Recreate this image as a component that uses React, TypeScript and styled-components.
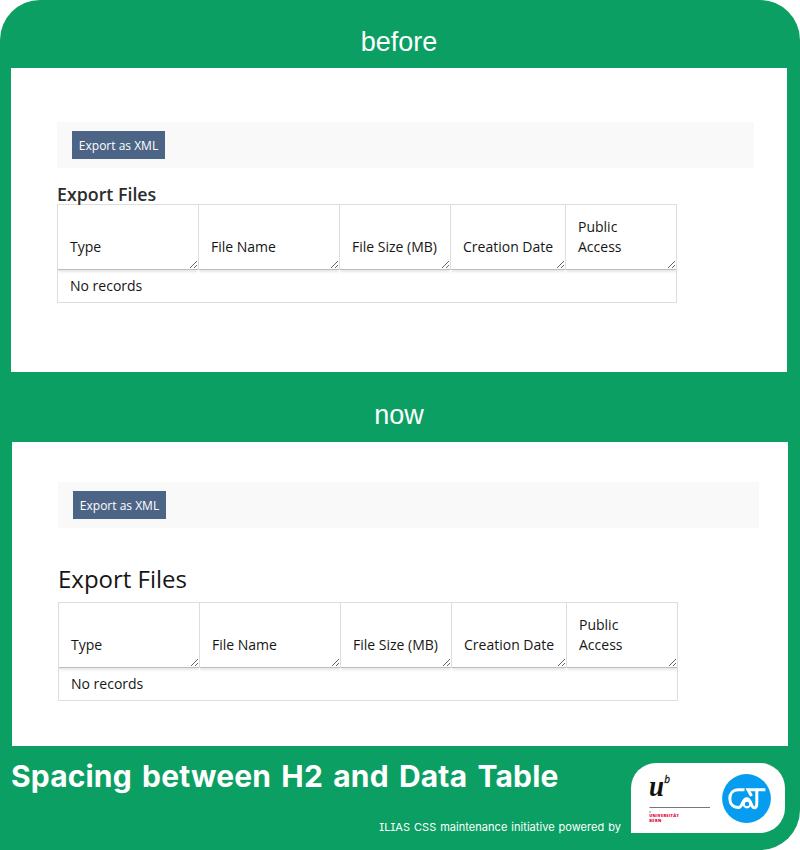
import React from "react";
import styled, { createGlobalStyle } from "styled-components";

const GlobalStyle = createGlobalStyle`
  *, *::before, *::after { box-sizing: border-box; }
  body { margin: 0; background: #fff; }
`;

const Poster = styled.main`
  display: flex;
  flex-direction: column;
  width: 800px;
  height: 850px;
  background: #0c9f64;
  border-radius: 40px 40px 40px 0;
  color: #fff;
  overflow: hidden;
`;

const Caption = styled.h2<{ $height: number; $nudge: number }>`
  flex: none;
  height: ${(p) => p.$height}px;
  margin: 0;
  padding: ${(p) => p.$nudge}px 2px 0 0;
  font: 400 27px/36px "Liberation Sans", sans-serif;
  text-align: center;
`;

const Panel = styled.section<{ $left: number; $top: number }>`
  flex: none;
  width: 776px;
  height: 304px;
  margin-left: ${(p) => p.$left}px;
  padding: ${(p) => p.$top}px 0 0 46px;
  background: #fff;
  color: #161616;
  font: 14px/20px "Open Sans", sans-serif;
`;

const Toolbar = styled.div<{ $width: number }>`
  display: flex;
  align-items: center;
  width: ${(p) => p.$width}px;
  height: 46px;
  padding-left: 15px;
  background: #f9f9f9;
`;

const Button = styled.button`
  width: 93px;
  height: 28px;
  padding: 1px 0 0;
  border: 0;
  background: #4c6586;
  color: #fff;
  font: 12px/27px "Open Sans", sans-serif;
  white-space: nowrap;
`;

const SectionTitle = styled.h3<{ $large?: boolean }>`
  margin: ${(p) => (p.$large ? "35px 0 8px" : "14px 0 -2px")};
  font-family: "Open Sans", sans-serif;
  font-size: ${(p) => (p.$large ? 24 : 17.8)}px;
  font-weight: ${(p) => (p.$large ? 400 : 600)};
  line-height: ${(p) => (p.$large ? 31 : 24)}px;
  color: ${(p) => (p.$large ? "#161616" : "#2c2c2c")};
`;

const Table = styled.div`
  width: 620px;
  height: 99px;
  border: 1px solid #ddd;
  border-right: 0;
`;

const HeaderRow = styled.div`
  display: grid;
  grid-template-columns: 141px 141px 111px 115px 111px;
  height: 65px;
`;

const HeaderCell = styled.div`
  position: relative;
  display: flex;
  align-items: flex-end;
  padding: 0 11px 13px 12px;
  border-right: 1px solid #ddd;
  white-space: pre-line;

  &::after {
    content: "";
    position: absolute;
    left: 0;
    right: 0;
    bottom: 0;
    height: 1px;
    background: #bdbdbd;
    box-shadow: 0 1px 3px rgba(0, 0, 0, 0.3);
    clip-path: inset(0 0 -5px 0);
  }
`;

const Grip = styled.svg`
  position: absolute;
  right: 0;
  bottom: 2px;
`;

const EmptyRow = styled.div`
  height: 32px;
  padding: 6px 12px;
  border-right: 1px solid #ddd;
`;

const Footer = styled.footer`
  display: flex;
  flex: 1;
  justify-content: space-between;
  padding: 0 15px 0 11px;
`;

const FooterText = styled.div`
  display: flex;
  flex-direction: column;
  width: 610px;
  font-family: Inter, sans-serif;
  font-feature-settings: "cv08" 1;
`;

const Title = styled.h1`
  margin: 9px 0 0;
  font-size: 30px;
  font-weight: 700;
  line-height: 42px;
  letter-spacing: 0.16px;
  word-spacing: 3px;
  white-space: nowrap;
`;

const Credit = styled.p`
  align-self: flex-end;
  margin: 21px 0 0;
  font-size: 11px;
  line-height: 18px;
  letter-spacing: 0.04px;
  word-spacing: 0.8px;
  white-space: nowrap;
`;

const LogoCard = styled.div`
  display: flex;
  width: 154px;
  height: 70px;
  margin-top: 17px;
  background: #fff;
  border-radius: 25px 25px 25px 0;
`;

const columns = ["Type", "File Name", "File Size (MB)", "Creation Date", "Public\nAccess"];

function DataTable() {
  return (
    <Table>
      <HeaderRow>
        {columns.map((name) => (
          <HeaderCell key={name}>
            {name}
            <Grip width="8" height="8" viewBox="0 0 8 8" shapeRendering="crispEdges">
              <path
                d="M0 7h1v1H0zM1 6h1v1H1zM2 5h1v1H2zM3 4h1v1H3zM4 3h1v1H4zM5 2h1v1H5zM6 1h1v1H6zM4 7h1v1H4zM5 6h1v1H5zM6 5h1v1H6z"
                fill="#666"
              />
            </Grip>
          </HeaderCell>
        ))}
      </HeaderRow>
      <EmptyRow>No records</EmptyRow>
    </Table>
  );
}

function ExportPanel({ left, top, barWidth, large }: { left: number; top: number; barWidth: number; large?: boolean }) {
  return (
    <Panel $left={left} $top={top}>
      <Toolbar $width={barWidth}>
        <Button>Export as XML</Button>
      </Toolbar>
      <SectionTitle $large={large}>Export Files</SectionTitle>
      <DataTable />
    </Panel>
  );
}

function Logos() {
  return (
    <svg width="154" height="70" viewBox="0 0 154 70">
      <text x="18" y="32.5" fontFamily="Liberation Serif, serif" fontSize="29" fontStyle="italic" fontWeight="700" fill="#111" textLength="15" lengthAdjust="spacingAndGlyphs">u</text>
      <text x="33.3" y="20" fontFamily="Open Sans, sans-serif" fontSize="10" fontStyle="italic" fill="#111" stroke="#111" strokeWidth="0.3">b</text>
      <path d="M18.5 44.5H79" stroke="#777" strokeWidth="1" />
      <path d="M19 48v2" stroke="#888" strokeWidth="1" />
      <g fontFamily="Open Sans, sans-serif" fontSize="4" fontWeight="800" fill="#e4003c">
        <text x="18.3" y="54.4" textLength="29.5">UNIVERSITÄT</text>
        <text x="18.3" y="59.1" textLength="12">BERN</text>
      </g>
      <circle cx="115.5" cy="35.5" r="24.4" fill="#069df0" />
      <g fill="none" stroke="#fff" strokeWidth="3">
        <path d="M113.5 26.8H107.5C102 26.8 98.8 30.4 98.8 35.6S102 44.6 107.5 44.6C111.8 44.6 110.8 35.8 115.8 35.8C120.3 35.8 119.8 44.8 123.3 44.8C125.3 44.8 125.8 43 125.8 40V27" />
        <path d="M134.4 26.8H117L120.5 33" />
        <circle cx="116" cy="41" r="3.3" strokeWidth="2.2" />
      </g>
    </svg>
  );
}

export default function App() {
  return (
    <>
      <GlobalStyle />
      <Poster>
        <Caption $height={68} $nudge={24}>before</Caption>
        <ExportPanel left={11} top={54} barWidth={697} />
        <Caption $height={70} $nudge={25}>now</Caption>
        <ExportPanel left={12} top={40} barWidth={701} large />
        <Footer>
          <FooterText>
            <Title>Spacing between H2 and Data Table</Title>
            <Credit>ILIAS CSS maintenance initiative powered by</Credit>
          </FooterText>
          <LogoCard>
            <Logos />
          </LogoCard>
        </Footer>
      </Poster>
    </>
  );
}
